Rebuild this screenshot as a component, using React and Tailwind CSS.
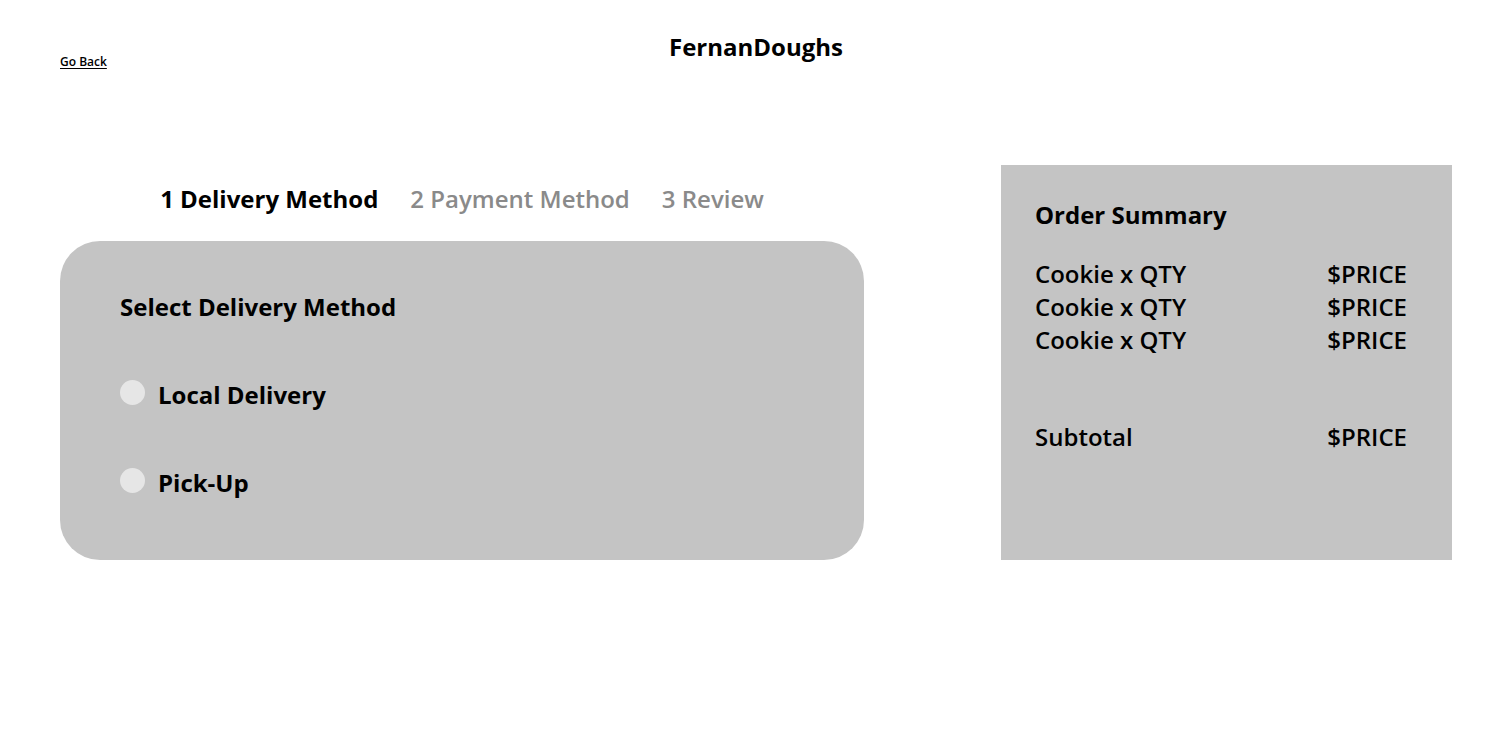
import React from "react";

export default function App() {
  return (
    <div className="min-h-[745px] w-full bg-white text-black font-['Open_Sans',sans-serif]">
      <header className="relative h-[100px] px-[60px]">
        <a className="absolute left-[60px] top-[53px] text-[12px] font-semibold leading-[18px] underline underline-offset-2 text-black">
          Go Back
        </a>
        <h1 className="pt-[32px] text-center text-[24px] font-bold leading-[30px]">FernanDoughs</h1>
      </header>
      <main className="flex justify-between px-[60px] pt-[65px]">
        <section className="w-[804px] flex flex-col">
          <nav className="flex justify-center gap-[32px] pt-[19px] h-[76px] text-[24px] leading-[30px]">
            <span className="font-bold text-black">1 Delivery Method</span>
            <span className="font-semibold text-[#8a8a8a]">2 Payment Method</span>
            <span className="font-semibold text-[#8a8a8a]">3 Review</span>
          </nav>
          <div className="h-[319px] rounded-[40px] bg-[#c4c4c4] pl-[60px] pt-[51px]">
            <h2 className="text-[24px] font-bold leading-[30px]">Select Delivery Method</h2>
            <div className="mt-[58px] flex flex-col gap-[58px]">
              <label className="flex items-center gap-[13px]">
                <span className="mt-[-6px] h-[25px] w-[25px] rounded-full bg-[#e6e6e6]" />
                <span className="text-[24px] font-bold leading-[30px]">Local Delivery</span>
              </label>
              <label className="flex items-center gap-[13px]">
                <span className="mt-[-6px] h-[25px] w-[25px] rounded-full bg-[#e6e6e6]" />
                <span className="text-[24px] font-bold leading-[30px]">Pick-Up</span>
              </label>
            </div>
          </div>
        </section>
        <aside className="w-[451px] h-[395px] bg-[#c4c4c4] pl-[34px] pr-[45px] pt-[35px]">
          <h2 className="text-[24px] font-bold leading-[30px]">Order Summary</h2>
          <div className="mt-[27px] flex flex-col text-[24px] font-semibold leading-[33px]">
            <div className="flex justify-between"><span>Cookie x QTY</span><span>$PRICE</span></div>
            <div className="flex justify-between"><span>Cookie x QTY</span><span>$PRICE</span></div>
            <div className="flex justify-between"><span>Cookie x QTY</span><span>$PRICE</span></div>
            <div className="mt-[64px] flex justify-between"><span>Subtotal</span><span>$PRICE</span></div>
          </div>
        </aside>
      </main>
    </div>
  );
}
